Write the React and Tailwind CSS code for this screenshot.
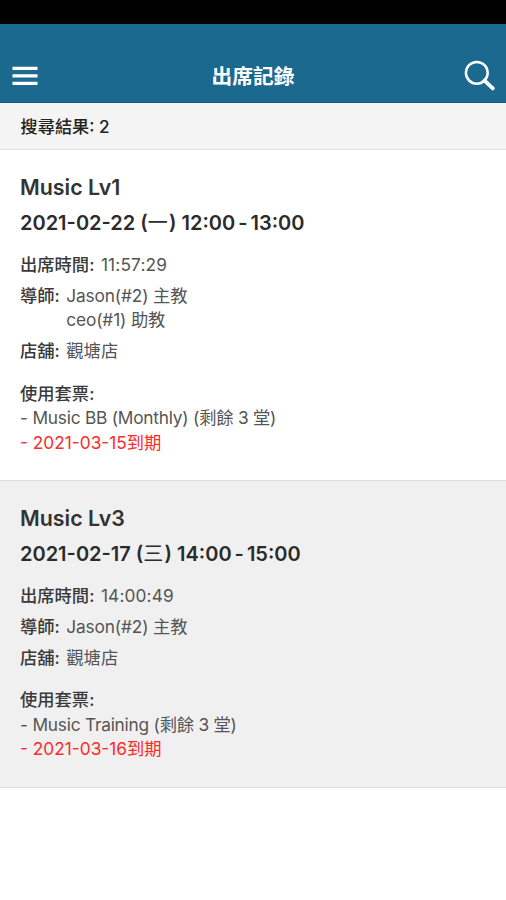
const records = [
  {
    id: 1,
    course: 'Music Lv1',
    date: '2021-02-22',
    weekday: '一',
    start: '12:00',
    end: '13:00',
    attendedAt: '11:57:29',
    tutors: ['Jason(#2) 主教', 'ceo(#1) 助教'],
    shop: '觀塘店',
    ticket: 'Music BB (Monthly) (剩餘 3 堂)',
    expiry: '2021-03-15到期',
  },
  {
    id: 2,
    course: 'Music Lv3',
    date: '2021-02-17',
    weekday: '三',
    start: '14:00',
    end: '15:00',
    attendedAt: '14:00:49',
    tutors: ['Jason(#2) 主教'],
    shop: '觀塘店',
    ticket: 'Music Training (剩餘 3 堂)',
    expiry: '2021-03-16到期',
  },
];

function Header() {
  return (
    <header className="bg-[#1c6990] h-[79px] pt-[26px] border-b border-[#16597c] flex items-center justify-between text-white">
      <button className="w-[60px] pl-3" aria-label="Menu">
        <svg className="w-[26px] h-[20px]" viewBox="0 0 26 20" fill="currentColor">
          <path d="M0.5 0.7h25v3.3h-25zM0.5 8.2h25v3.3h-25zM0.5 15.7h25v3.3h-25z" />
        </svg>
      </button>
      <h1 className="pt-px text-[20.7px] leading-6 font-bold">出席記錄</h1>
      <button className="w-[60px] pr-2.5 flex justify-end" aria-label="Search">
        <svg className="w-8 h-8" viewBox="0 0 32 32" fill="none" stroke="currentColor">
          <circle cx="12.8" cy="12.8" r="10.9" strokeWidth="2.5" />
          <path d="M20.6 20.6L28.8 28.4" strokeWidth="3.8" strokeLinecap="round" />
        </svg>
      </button>
    </header>
  );
}

function Field({ label, children }) {
  return (
    <div className="flex mb-[6.3px]">
      <span className="font-medium text-[#3a3a3a] mr-[6.5px] whitespace-nowrap">{label}:</span>
      <div>{children}</div>
    </div>
  );
}

function Record({ record, shaded }) {
  return (
    <li className={`pl-5 pr-5 pt-[22px] pb-[25px] border-b border-[#dedede] ${shaded ? 'bg-[#f0f0f0]' : 'bg-white'}`}>
      <h2 className="text-[21.4px] leading-[30px] font-semibold text-[#333]">{record.course}</h2>
      <p className="mt-[6px] mb-[15px] text-[20px] leading-[30px] font-semibold text-[#2b2b2b] whitespace-nowrap">
        {record.date} (<span className="font-normal tracking-[1.2px]">{record.weekday}</span>) {record.start}
        <span className="mx-[3px]">-</span>
        {record.end}
      </p>
      <div className="text-[17.3px] leading-[24.5px] text-[#555]">
        <Field label="出席時間">
          <span className="tracking-[0.15px]">{record.attendedAt}</span>
        </Field>
        <Field label="導師">
          {record.tutors.map((tutor) => (
            <p key={tutor} className="tracking-[-0.15px]">{tutor}</p>
          ))}
        </Field>
        <Field label="店舖">{record.shop}</Field>
        <div className="mt-[18px]">
          <p className="font-medium text-[#3a3a3a]">使用套票:</p>
          <p className="tracking-[-0.22px]">- {record.ticket}</p>
          <p className="text-[#fb2c2c]">- {record.expiry}</p>
        </div>
      </div>
    </li>
  );
}

function App() {
  return (
    <div className="min-h-screen bg-white font-['Inter','Noto_Sans_CJK_TC',sans-serif]">
      {/* Status bar */}
      <div className="h-6 bg-black" />
      <Header />

      {/* Result count */}
      <div className="h-[47px] pt-px px-[20.5px] flex items-center bg-[#f4f4f4] border-b border-[#e0e0e0] text-[17.2px] font-medium text-[#222]">
        搜尋結果: 2
      </div>

      <ul>
        {records.map((record, index) => (
          <Record key={record.id} record={record} shaded={index % 2 === 1} />
        ))}
      </ul>
    </div>
  );
}

export default App;
